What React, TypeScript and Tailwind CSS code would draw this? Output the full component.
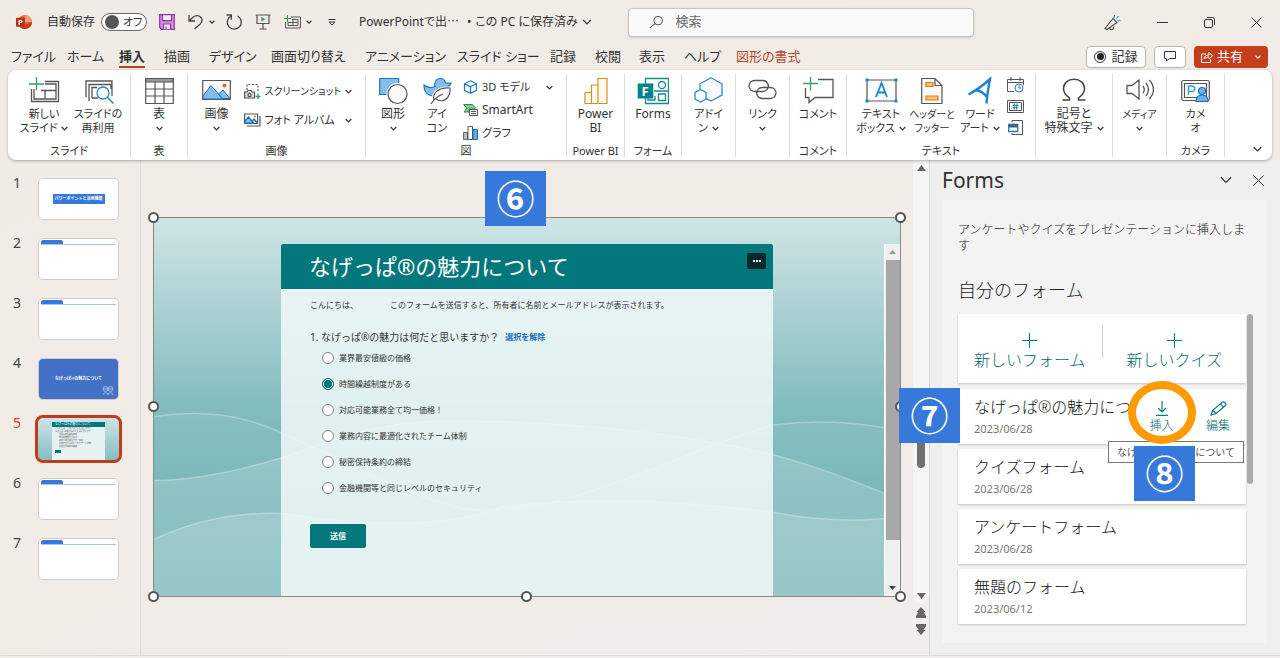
import type { ReactNode } from "react";
import { useState } from "react";

function Chevron({ className = "h-[5px] w-[7px]" }: { className?: string }) {
  return (
    <svg viewBox="0 0 8 5" className={`inline-block shrink-0 ${className}`} fill="none" stroke="#333" strokeWidth="1.2">
      <path d="M0.8 0.8 4 4 7.2 0.8" vectorEffect="non-scaling-stroke" />
    </svg>
  );
}

/* Ribbon building blocks */

function Group({ label, children }: { label?: string; children: ReactNode }) {
  return (
    <section className="my-1 flex min-w-0 flex-col border-r border-[#dcdcdc]">
      <div className="flex flex-1 justify-center pt-[3px]">{children}</div>
      <p className="h-[14px] text-center text-[11px] leading-4 whitespace-nowrap">{label}</p>
    </section>
  );
}

type BigButtonProps = {
  icon: ReactNode;
  top: string;
  bottom?: string;
  arrow?: boolean;
  width?: string;
  size?: string;
};

function BigButton({ icon, top, bottom, arrow, width = "w-[54px]", size = "text-[12px]" }: BigButtonProps) {
  return (
    <button type="button" className={`flex shrink-0 flex-col items-center leading-[14px] whitespace-nowrap ${width} ${size}`}>
      <span className="flex h-[30px] items-start">{icon}</span>
      <span>{top}</span>
      <span className="flex h-[14px] items-center gap-1">
        {bottom}
        {arrow && <Chevron />}
      </span>
    </button>
  );
}

type SmallButtonProps = {
  icon: ReactNode;
  label: string;
  arrow?: boolean;
  wide?: boolean;
  size?: string;
};

function SmallButton({ icon, label, arrow, wide, size = "text-[12px]" }: SmallButtonProps) {
  return (
    <button type="button" className={`flex h-5 w-full items-center gap-1 leading-4 whitespace-nowrap ${size}`}>
      <span className="shrink-0">{icon}</span>
      <span className={wide ? "flex-1 text-left" : ""}>{label}</span>
      {arrow && <Chevron />}
    </button>
  );
}

const TABS = [
  "ファイル", "ホーム", "挿入", "描画", "デザイン", "画面切り替え", "アニメーション",
  "スライド ショー", "記録", "校閲", "表示", "ヘルプ", "図形の書式",
];

function TitleBar() {
  return (
    <header className="flex h-11 items-center pl-[15px]">
      <svg viewBox="0 0 18 18" className="h-[17px] w-[18px]">
        <circle cx="10" cy="8.500" r="7.500" fill="#e8623a" />
        <path d="M10 1a7.500 7.500 0 0 1 7.500 7.500H10z" fill="#f79a7c" />
        <path d="M17.500 8.500a7.500 7.500 0 0 1-13 5z" fill="#c8401f" />
        <rect x="0.500" y="4" width="9.500" height="9.500" rx="1" fill="#b7301a" />
        <text x="2.600" y="11.600" fontSize="8" fontWeight="700" fill="#fff">P</text>
      </svg>
      <span id="autosave" className="ml-[14px] text-[12px]">自動保存</span>
      <button type="button" role="switch" aria-checked="false" aria-labelledby="autosave" className="ml-[6px] flex h-[18px] w-[46px] items-center gap-1 rounded-full border border-[#666] bg-white pl-[3px] text-[11px]">
        <span className="h-[14px] w-[14px] rounded-full bg-[#555]" />
        オフ
      </button>
      <button type="button" aria-label="上書き保存" className="ml-3">
        <svg viewBox="0 0 16 16" className="h-4 w-4" fill="#d58be0" stroke="#8a3aa0" strokeWidth="1.200">
          <path d="M0.700 0.700h14.600v14.600H2.500L0.700 13.500z" />
          <path d="M3.500 0.700h9v6h-9z" fill="#f6e9f8" />
          <path d="M4.500 15.300V10h7v5.300M7 12.500v2.800" fill="#f6e9f8" />
        </svg>
      </button>
      <button type="button" aria-label="元に戻す" className="ml-[13px] flex items-center gap-[5px]">
        <svg viewBox="0 0 16 16" className="h-4 w-4" fill="none" stroke="#444" strokeWidth="1.300">
          <path d="M1 1v6h6M1.200 6.800 5 3.300c3-2.600 6.500-1.800 8 .2 1.600 2.200 1 4.800-1 6.700L6.500 15" />
        </svg>
        <Chevron className="h-1 w-[6px]" />
      </button>
      <button type="button" aria-label="やり直し" className="ml-[10px]">
        <svg viewBox="0 0 18 16" className="h-4 w-[18px]" fill="none" stroke="#444" strokeWidth="1.300">
          <path d="M5.500 2.300A7 7 0 1 0 12.500 2M1.500 1h4.800v4.800" />
        </svg>
      </button>
      <button type="button" aria-label="スライドショー" className="ml-3">
        <svg viewBox="0 0 16 16" className="h-4 w-4" fill="none" stroke="#555" strokeWidth="1.200">
          <path d="M0.500 1h15M2 1v8.500h12V1M8 9.500V15M4.500 15h7" />
          <path d="m6.300 3 4 2.300-4 2.300z" fill="#2f9e55" stroke="none" />
        </svg>
      </button>
      <button type="button" aria-label="新しいスライド" className="ml-[13px] flex items-center gap-[5px]">
        <svg viewBox="0 0 17 14" className="h-[14px] w-[17px]" fill="none" stroke="#555" strokeWidth="1">
          <path d="M7 2h9.500v11H1.500V7M8 4.500h6v6H4V7M9 4.500v6M4 7.500h10" />
          <path d="M3.500 0v7M0 3.500h7" stroke="#2f9e55" />
        </svg>
        <Chevron className="h-1 w-[6px]" />
      </button>
      <button type="button" aria-label="クイック アクセス ツール バーのユーザー設定" className="ml-4">
        <svg viewBox="0 0 8 7" className="h-[7px] w-2" fill="none" stroke="#333">
          <path d="M0.500 0.500h7M1 3l3 3 3-3z" />
        </svg>
      </button>
      <button type="button" className="ml-[23px] flex items-center gap-1 text-[12px] whitespace-nowrap">
        <span>PowerPointで出⋯</span>
        <span className="ml-1">•</span>
        <span>この PC に保存済み</span>
        <Chevron className="h-[6px] w-[10px]" />
      </button>
      <label className="ml-9 flex h-[29px] max-w-[346px] flex-1 items-center rounded border border-[#c9c5c1] bg-[#fafafa] pl-5 shadow-sm">
        <svg viewBox="0 0 16 14" className="h-[14px] w-4" fill="none" stroke="#555" strokeWidth="1.100">
          <circle cx="10" cy="5.500" r="4.600" />
          <path d="M6.600 8.800 1 13.500" />
        </svg>
        <input type="search" aria-label="検索" placeholder="検索" className="ml-3 w-full bg-transparent text-[13px] outline-none placeholder:text-[#666]" />
      </label>
      <div className="ml-auto flex items-center gap-9 pr-[18px]">
        <button type="button" aria-label="新機能">
          <svg viewBox="0 0 17 17" className="h-[17px] w-[17px]" fill="none" stroke="#444" strokeWidth="1.100">
            <path d="M1 14.500 9 4.500l4 4L3 15.500zM5.500 14.500c2 2 4.500 1 4.500-2" />
            <path d="m10 4 .5-3M12.500 4.500l2-2.500M13.500 7l3-.5" stroke="#1b86d1" />
          </svg>
        </button>
        <button type="button" aria-label="最小化">
          <svg viewBox="0 0 11 11" className="h-[11px] w-[11px]" stroke="#333"><path d="M0 5.500h11" /></svg>
        </button>
        <button type="button" aria-label="元のサイズに戻す">
          <svg viewBox="0 0 11 11" className="h-[11px] w-[11px]" fill="none" stroke="#333">
            <rect x="0.500" y="2.500" width="8" height="8" rx="1.500" />
            <path d="M3 .5h5.500a2 2 0 0 1 2 2V8" />
          </svg>
        </button>
        <button type="button" aria-label="閉じる">
          <svg viewBox="0 0 11 11" className="h-[11px] w-[11px]" stroke="#333"><path d="m.5.5 10 10m0-10-10 10" /></svg>
        </button>
      </div>
    </header>
  );
}

function TabRow() {
  return (
    <div className="flex h-[26px] items-center pr-[12px]">
      <nav className="grid grid-cols-[56px_52px_45px_45px_62px_94px_92px_93px_45px_44px_45px_52px_80px] pl-[11px] text-[13px] leading-5 whitespace-nowrap">
        {TABS.map((tab) => (
          <div key={tab}>
            <button
              type="button"
              className={
                tab === "挿入"
                  ? "border-b-2 border-[#c43e1c] font-bold"
                  : tab === "図形の書式"
                    ? "border-b-2 border-transparent text-[#b7472a]"
                    : "border-b-2 border-transparent"
              }
            >
              {tab}
            </button>
          </div>
        ))}
      </nav>
      <div className="ml-auto flex gap-2 pb-[1px] text-[13px]">
        <button type="button" className="flex h-[22px] w-[60px] items-center justify-center gap-[5px] rounded border border-[#b9b5b2] bg-white">
          <span className="flex h-3 w-3 items-center justify-center rounded-full border border-[#333]">
            <span className="h-[7px] w-[7px] rounded-full bg-[#222]" />
          </span>
          記録
        </button>
        <button type="button" aria-label="コメント" className="flex h-[22px] w-8 items-center justify-center rounded border border-[#b9b5b2] bg-white">
          <svg viewBox="0 0 12 11" className="h-[11px] w-3" fill="none" stroke="#333">
            <path d="M.5.500h11v7h-6l-3 2.500V7.500h-2z" />
          </svg>
        </button>
        <button type="button" className="flex h-[22px] w-[74px] items-center justify-center gap-1 rounded bg-[#c43e1c] text-white">
          <svg viewBox="0 0 12 12" className="h-3 w-3" fill="none" stroke="#fff">
            <path d="M5 3H.500v8.500h9V8M3 8c.5-3 2-4 5-4V1l3.500 4L8 8V6C6 6 4.500 6.500 3 8z" />
          </svg>
          共有
          <svg viewBox="0 0 8 5" className="ml-2 h-1 w-[6px]" fill="none" stroke="#fff" strokeWidth="1.600"><path d="M.8.800 4 4 7.200.800" /></svg>
        </button>
      </div>
    </div>
  );
}

function Ribbon() {
  return (
    <div className="relative z-10 mx-2 grid h-[90px] grid-cols-[123px_57px_178px_201px_58px_57px_54px_54px_57px_189px_77px_54px_58px_1fr] rounded-lg bg-white shadow-[0_1px_3px_rgba(0,0,0,0.3)]">
      <Group label="スライド">
        <span className="w-1" />
        <BigButton
          top="新しい" bottom="スライド" arrow size="text-[11px]"
          icon={
            <svg viewBox="0 0 31 28" className="h-7 w-[31px]" fill="none" stroke="#555" strokeWidth="1.300">
              <path d="M16 4.500h13.500v20h-27V12M16 7h11v15H5V12M12 13.500h15M16 13.500V22" />
              <path d="M7.500 0v13.500M0 7h15" stroke="#35a35c" />
            </svg>
          }
        />
        <BigButton
          top="スライドの" bottom="再利用" size="text-[11px]"
          icon={
            <svg viewBox="0 0 31 28" className="h-7 w-[31px]" fill="none" stroke="#555" strokeWidth="1.300">
              <path d="M3 20V4h26v15M6 24V7.500h22V12M9 21V10.500h5M9 21h6" />
              <circle cx="20" cy="16" r="6" fill="#fff" stroke="#1b86d1" />
              <path d="m24.500 20.500 6 6" stroke="#1b86d1" strokeWidth="1.500" />
            </svg>
          }
        />
      </Group>

      <Group label="表">
        <BigButton
          top="表" arrow
          icon={
            <svg viewBox="0 0 29 28" className="h-7 w-[29px]" fill="none" stroke="#555" strokeWidth="1.200">
              <path d="M.7 1.500h27.600v25H.700zM.7 12h27.600M.7 19h27.600M10 5v21.500M19 5v21.500" />
              <path d="M.7 1.500h27.600V5H.700z" fill="#999" />
            </svg>
          }
        />
      </Group>

      <Group label="画像">
        <BigButton
          top="画像" arrow
          icon={
            <svg viewBox="0 0 29 24" className="h-6 w-[29px]" fill="none" stroke="#555" strokeWidth="1.200">
              <path d="M.7 3.500h27.600v19H.700z" fill="#fafafa" />
              <path d="m1 19 8-10.500 12 13.500H1zM16.500 17l4.500-4 7 8.500H20z" fill="#83beec" stroke="#1b70b8" strokeWidth="1" />
              <circle cx="22.500" cy="8.500" r="2" fill="#e66a15" stroke="none" />
            </svg>
          }
        />
        <div className="flex w-[120px] flex-col gap-[9px] pt-1 pr-3">
          <SmallButton
            label="スクリーンショット" arrow size="text-[10px]"
            icon={
              <svg viewBox="0 0 17 16" className="h-4 w-[17px]" fill="none" stroke="#555" strokeWidth="1.200">
                <path d="M3 7V1.500h11v7" strokeDasharray="2 1.500" />
                <path d="M.6 9H3l1-1.500h3L8 9h2.500v6H.600z" fill="#ddd" />
                <circle cx="5.500" cy="12" r="1.600" />
                <path d="M14 11v5M11.500 13.500h5" stroke="#35a35c" strokeWidth="1.500" />
              </svg>
            }
          />
          <SmallButton
            label="フォト アルバム" arrow wide size="text-[11px]"
            icon={
              <svg viewBox="0 0 17 14" className="h-[14px] w-[17px]" fill="none" stroke="#555" strokeWidth="1.200">
                <path d="M3 13h13V3" />
                <path d="M.6 1h13v9.500H.600z" fill="#fff" />
                <path d="m1 8 3.500-4 5 6H1zM8 8l2-2 3.500 4" fill="#83beec" stroke="#1b70b8" />
                <circle cx="11" cy="3.500" r="1" fill="#e66a15" stroke="none" />
              </svg>
            }
          />
        </div>
      </Group>

      <Group label="図">
        <BigButton
          top="図形" arrow width="w-[44px]"
          icon={
            <svg viewBox="0 0 29 28" className="h-7 w-[29px]" strokeWidth="1.200">
              <path d="M.7 1.500h19v16H.700z" fill="#83beec" stroke="#1b78c4" />
              <circle cx="18.500" cy="17" r="11" fill="#fff" />
              <circle cx="18.500" cy="17" r="9.500" fill="#fafafa" stroke="#555" />
            </svg>
          }
        />
        <BigButton
          top="アイ" bottom="コン" width="w-[44px]" size="text-[11px]"
          icon={
            <svg viewBox="0 0 29 28" className="h-7 w-[29px]" strokeWidth="1.200">
              <path d="M1 8c4 3 8 3 11 1.500-1-4 1-8 5-8 3 0 5 2 5.500 4.500L28 6c-1 3-3 4-5 4.500C23 16 17 19 11 19 5 19 1 15 1 8z" fill="#83beec" stroke="#1b78c4" />
              <path d="M11 23c-2-6 4-13 16-12 1 9-6 16-14 11" fill="#fff" stroke="#fff" strokeWidth="3" />
              <path d="M11 23c-2-6 4-13 16-12 1 9-6 16-14 11" fill="#fff" stroke="#555" />
              <path d="M8 27c3-5 7-8 12-10" fill="none" stroke="#555" />
            </svg>
          }
        />
        <div className="flex w-[102px] flex-col gap-[3px] pr-2 pl-1">
          <SmallButton
            label="3D モデル" arrow wide size="text-[11px]"
            icon={
              <svg viewBox="0 0 14 14" className="h-[14px] w-[15px]" fill="none" stroke="#1b78c4" strokeWidth="1.200">
                <path d="m7 .8 6 3v6.500l-6 3-6-3V3.800zM1 3.800l6 3 6-3M7 7v6.500" />
              </svg>
            }
          />
          <SmallButton
            label="SmartArt"
            icon={
              <svg viewBox="0 0 15 12" className="h-3 w-[15px]" strokeWidth="1">
                <path d="M.500.500h9l3 3.500-1 1H6v3H1L4 4z" fill="#7bcf93" stroke="#2d8a4a" />
                <path d="M6.500 5.500h8v6h-8z" fill="#eee" stroke="#555" />
                <path d="M8 7.500h5M8 9.500h5" stroke="#555" />
              </svg>
            }
          />
          <SmallButton
            label="グラフ" size="text-[11px]"
            icon={
              <svg viewBox="0 0 15 14" className="h-[14px] w-[15px]" strokeWidth="1">
                <path d="M.5 6.500h4v7h-4z" fill="#bbb" stroke="#666" />
                <path d="M5 .500h4.500v13H5z" fill="#fff" stroke="#555" />
                <path d="M10 3.500h4.500v10H10z" fill="#5fa9e6" stroke="#1b70b8" />
              </svg>
            }
          />
        </div>
      </Group>

      <Group label="Power BI">
        <BigButton
          top="Power" bottom="BI"
          icon={
            <svg viewBox="0 0 24 28" className="h-7 w-6" fill="#fffaf0" stroke="#dc8e1b" strokeWidth="1.200">
              <path d="M14 1.500h9v25h-9zM7.500 8h6.500v18.500H7.500zM1 15.500h6.500v11H1z" />
            </svg>
          }
        />
      </Group>

      <Group label="フォーム">
        <BigButton
          top="Forms"
          icon={
            <svg viewBox="0 0 32 28" className="h-7 w-8" fill="none" stroke="#1b8a8c" strokeWidth="1.300">
              <path d="M8.500 1.500h23v25h-23zM17 14h14.500M11 19v4h7v-4" />
              <circle cx="25" cy="8" r="3.500" />
              <path d="M21.500 17h7v6.500h-7z" />
              <path d="M.7 6.500h15.600v15H.700z" fill="#038387" stroke="none" />
              <text x="4.500" y="18.500" fontSize="13" fontWeight="700" fill="#fff" stroke="none">F</text>
            </svg>
          }
        />
      </Group>

      <Group>
        <BigButton
          top="アドイ" bottom="ン" arrow size="text-[11px]"
          icon={
            <svg viewBox="0 0 29 27" className="h-[27px] w-[29px]" fill="#f8fafd" stroke="#2b88d8" strokeWidth="1.300">
              <path d="m17 .8 11 6V18l-11 6-11-6V6.800z" />
              <path d="m6.500 12.500 5.500 3v6.500l-5.500 3-5.500-3v-6.500z" fill="#fff" />
            </svg>
          }
        />
      </Group>

      <Group>
        <BigButton
          top="リンク" arrow size="text-[11px]"
          icon={
            <svg viewBox="0 0 29 24" className="h-6 w-[29px]" fill="none" stroke="#555" strokeWidth="1.300">
              <path d="M10 14.500H6.500A5.500 5.500 0 0 1 6.500 3.500h8a5.500 5.500 0 0 1 4.500 9" />
              <path d="M19 10.500h3.500a5.500 5.500 0 0 1 0 11h-8a5.500 5.500 0 0 1-4.500-9" />
              <path d="M10 12.500c1-1.500 2.500-2 4.500-2H19M19 12.500c-1 1.500-2.500 2-4.500 2H10" />
            </svg>
          }
        />
      </Group>

      <Group label="コメント">
        <BigButton
          top="コメント" size="text-[11px]"
          icon={
            <svg viewBox="0 0 31 27" className="h-[27px] w-[31px]" fill="none" stroke="#555" strokeWidth="1.300">
              <path d="M15 2.500h15v18H12L6 25.500v-5H2.500V11" />
              <path d="M7.500 0v13.500M0 6.500h15" stroke="#35a35c" />
            </svg>
          }
        />
      </Group>

      <Group label="テキスト">
        <BigButton
          top="テキスト" bottom="ボックス" arrow width="w-[52px]" size="text-[11px]"
          icon={
            <svg viewBox="0 0 33 26" className="h-[26px] w-[33px]" fill="none" stroke="#555" strokeWidth="1.200">
              <path d="M2 3h29v21H2z" />
              <path d="M.5 1.500h3v3h-3zM29.500 1.500h3v3h-3zM.5 22.500h3v3h-3zM29.500 22.500h3v3h-3z" fill="#1b86d1" stroke="none" />
              <path d="m11 20 5.500-14L22 20M13 15.500h7" stroke="#1b86d1" strokeWidth="1.800" />
            </svg>
          }
        />
        <BigButton
          top="ヘッダーと" bottom="フッター" width="w-[50px]" size="text-[10px]"
          icon={
            <svg viewBox="0 0 22 28" className="h-7 w-[22px]" fill="#fafafa" stroke="#555" strokeWidth="1.200">
              <path d="M.7 1.500H14L21 8.500v18H.700zM14 1.500v7h7" />
              <path d="M5 5.500h7v4H5zM5 19h12v4H5z" fill="#fbc36b" stroke="#e07a10" />
            </svg>
          }
        />
        <BigButton
          top="ワード" bottom="アート" arrow width="w-[46px]" size="text-[11px]"
          icon={
            <svg viewBox="0 0 24 28" className="h-7 w-6" fill="none" stroke="#1b86d1" strokeWidth="2.400">
              <path d="M.5 17.500C9 13 16 7.500 22 2c-1.500 8-3 16-3.500 24.500M7 13c5 .5 9 3 12 7" />
            </svg>
          }
        />
        <div className="flex w-6 flex-col items-center gap-[7px]">
          <button type="button" aria-label="日付と時刻">
            <svg viewBox="0 0 17 16" className="h-4 w-[17px]" fill="none" stroke="#555">
              <path d="M7 14.500H.500v-12h16V8M.5 5.500h16M4 0v4M13 0v4" />
              <circle cx="12" cy="11" r="4" fill="#fff" stroke="#1b78c4" />
              <path d="M12 8.500V11h2" stroke="#1b78c4" />
            </svg>
          </button>
          <button type="button" aria-label="スライド番号">
            <svg viewBox="0 0 17 13" className="h-[13px] w-[17px]" fill="none" stroke="#555">
              <path d="M.5.500h16v12H.500zM2.500 2.500h12v8h-12z" />
              <path d="M7.500 3.500 7 9.500M10 3.500l-.5 6M5.500 5.500h6M5.500 7.700h6" stroke="#1b78c4" />
            </svg>
          </button>
          <button type="button" aria-label="オブジェクト">
            <svg viewBox="0 0 15 15" className="h-[15px] w-[15px]" fill="none" stroke="#555">
              <path d="M4 2.500V.500h10.500v14H4V13" />
              <path d="M.7 4.500h9v7h-9z" fill="#fff" stroke="#1b78c4" strokeWidth="1.300" />
              <path d="M1 5h8.500v2H1z" fill="#1b78c4" />
            </svg>
          </button>
        </div>
      </Group>

      <Group>
        <BigButton
          top="記号と" bottom="特殊文字" arrow width="w-[70px]"
          icon={
            <svg viewBox="0 0 24 27" className="h-[27px] w-6" fill="none" stroke="#444" strokeWidth="1.500">
              <path d="M.5 23h7v-2C3 18 1.500 15 1.500 11.500 1.500 6 6 2.300 12 2.300S22.500 6 22.500 11.500c0 3.500-1.500 6.500-6 9.500v2h7" />
            </svg>
          }
        />
      </Group>

      <Group>
        <BigButton
          top="メディア" arrow size="text-[10px]"
          icon={
            <svg viewBox="0 0 28 24" className="h-6 w-7" fill="none" stroke="#555" strokeWidth="1.300">
              <path d="M1 8.500h5L13 3v19l-7-5.500H1zM17 9c1.500 2 1.500 5 0 7M20 6c3 4 3 9 0 13M23.500 3c5 6 5 13 0 19" />
            </svg>
          }
        />
      </Group>

      <Group label="カメラ">
        <BigButton
          top="カメ" bottom="オ" size="text-[11px]"
          icon={
            <svg viewBox="0 0 29 26" className="h-[26px] w-[29px]" fill="none" stroke="#555" strokeWidth="1.200">
              <rect x=".7" y="3.500" width="27.600" height="20" rx="2" />
              <path d="M3.500 6.500h22v14h-22z" />
              <path d="M7.500 18V9h3.500a2.700 2.700 0 0 1 0 5.500H7.500" stroke="#3f9fe6" strokeWidth="1.600" />
              <circle cx="21" cy="14" r="3.500" fill="#6db0ea" stroke="#1b70b8" />
              <path d="M15 24.500c0-5 2-6.500 6-6.500s6 1.500 6 6.500z" fill="#6db0ea" stroke="#1b70b8" />
            </svg>
          }
        />
      </Group>

      <button type="button" aria-label="リボンを折りたたむ" className="flex items-end justify-end pr-[9px] pb-[9px]">
        <Chevron className="h-[6px] w-[11px]" />
      </button>
    </div>
  );
}

/* Slide list */

function MiniForm() {
  return (
    <div className="flex h-full flex-col bg-gradient-to-b from-[#cde4e6] to-[#86bdc0] px-[14px] pt-[4px]">
      <p className="bg-[#03787c] pl-[3px] text-[3px] leading-[5px] text-white">なげっぱ®の魅力について</p>
      <div className="flex-1 bg-[#e6f2f2] pl-[3px] text-[2px] leading-[3px] text-[#555]">
        <p>こんにちは、このフォームを送信すると</p>
        <p>なげっぱ®の魅力は何だと思いますか？</p>
        <p className="pl-1">業界最安値級の価格</p>
        <p className="pl-1">時間繰越制度がある</p>
        <p className="pl-1">対応可能業務全て均一価格！</p>
        <p className="pl-1">業務内容に最適化されたチーム体制</p>
        <p className="pl-1">秘密保持条約の締結</p>
        <p className="mt-[2px] h-[3px] w-[6px] bg-[#03787c]" />
      </div>
    </div>
  );
}

function SlideThumb({ index }: { index: number }) {
  if (index === 1) {
    return (
      <div className="flex h-full items-center justify-center bg-white">
        <span className="bg-[#3779db] px-[2px] text-[4px] leading-[10px] font-bold whitespace-nowrap text-white">パワーポイントと活用機能</span>
      </div>
    );
  }
  if (index === 4) {
    return (
      <div className="relative flex h-full items-center justify-center bg-[#4371c5]">
        <span className="text-[4px] font-bold whitespace-nowrap text-white">なげっぱ®の魅力について</span>
        <svg viewBox="0 0 12 10" className="absolute right-1 bottom-[3px] h-[10px] w-3" fill="none" stroke="#b9cbec" strokeWidth=".8">
          <circle cx="3.500" cy="3" r="2.400" />
          <circle cx="8.500" cy="3" r="2.400" />
          <path d="M1 3h10M1 9c0-3 5-3 5 0 0-3 5-3 5 0" />
        </svg>
      </div>
    );
  }
  if (index === 5) return <MiniForm />;
  return (
    <div className="h-full bg-white px-[2px] pt-[1px]">
      <div className="border-b border-[#a9c6f2]">
        <p className="h-1 w-[22px] rounded-t-xs bg-[#3779db]" />
      </div>
    </div>
  );
}

function SlideList() {
  return (
    <aside className="w-[141px] shrink-0 border-r border-[#dfdcda] pt-[18px]">
      <ol className="flex flex-col gap-[18px]">
        {[1, 2, 3, 4, 5, 6, 7].map((n) => (
          <li key={n} className="flex gap-[15px] pl-[13px]">
            <span className={`w-[10px] text-[14px] leading-[10px] ${n === 5 ? "text-[#d14424]" : "text-[#444]"}`}>{n}</span>
            <button
              type="button"
              aria-label={`スライド ${n}`}
              className={`h-[42px] w-[81px] overflow-hidden rounded-[5px] text-left ${
                n === 5 ? "outline-3 outline-[#bf3c1d]" : "border border-[#cfcccb]"
              }`}
            >
              <SlideThumb index={n} />
            </button>
          </li>
        ))}
      </ol>
    </aside>
  );
}

/* Slide canvas */

const OPTIONS = [
  "業界最安値級の価格",
  "時間繰越制度がある",
  "対応可能業務全て均一価格！",
  "業務内容に最適化されたチーム体制",
  "秘密保持条約の締結",
  "金融機関等と同じレベルのセキュリティ",
];

function Waves() {
  return (
    <svg viewBox="0 0 748 380" preserveAspectRatio="none" className="absolute inset-0 h-full w-full">
      <defs>
        <linearGradient id="sky" x1="0" y1="0" x2="0" y2="1">
          <stop offset="0" stopColor="#cde5e7" />
          <stop offset="0.070" stopColor="#c5dfe0" />
          <stop offset="0.500" stopColor="#82bcbe" />
          <stop offset="0.720" stopColor="#72b3b5" />
          <stop offset="1" stopColor="#68adb0" />
        </linearGradient>
      </defs>
      <path d="M0 0h748v380H0z" fill="url(#sky)" />
      <g fill="#fff" fillOpacity="0.060" stroke="#fff" strokeOpacity="0.300" strokeWidth="1.500">
        <path d="M-2 200C50 192 90 198 128 216 190 242 240 275 310 292c100 14 220 -60 311 -84 50 -6 90 -2 130 6V382H-2z" />
        <path d="M-2 264C40 264 85 254 128 241 180 222 230 204 290 204c120 0 230 10 331 34 45 12 85 28 130 46V382H-2z" fillOpacity="0.160" />
        <path d="M-2 324C40 304 80 296 128 297 220 312 300 310 350 290c90-10 180 -6 271 6 50 9 90 10 130 4V382H-2z" fillOpacity="0.140" />
      </g>
    </svg>
  );
}

function SurveyForm() {
  const [answer, setAnswer] = useState(1);
  return (
    <form onSubmit={(e) => e.preventDefault()} className="mr-[111px] flex min-w-0 flex-1 flex-col rounded-t-xs bg-[#f1f9f8]/85 text-[8px] text-[#333]">
      <div className="flex h-[46px] items-center justify-between rounded-t-xs border-b border-white bg-[#03787c] pl-7">
        <h1 className="text-[22px] text-white">なげっぱ®の魅力について</h1>
        <button type="button" aria-label="その他" className="mr-[7px] mb-3 flex h-4 w-[19px] items-center justify-center gap-[1px] rounded-xs bg-[#03292d]">
          <span className="h-[2px] w-[2px] bg-white" />
          <span className="h-[2px] w-[2px] bg-white" />
          <span className="h-[2px] w-[2px] bg-white" />
        </button>
      </div>
      <div className="pt-[7px] pl-[29px]">
        <p className="flex gap-8 leading-4">
          <span>こんにちは、</span>
          <span>このフォームを送信すると、所有者に名前とメールアドレスが表示されます。</span>
        </p>
        <fieldset>
          <div className="mt-4 flex items-center gap-[6px] leading-4">
            <legend className="text-[10px]">1. なげっぱ®の魅力は何だと思いますか？</legend>
            <button type="button" onClick={() => setAnswer(-1)} className="font-bold text-[#1070b8]">選択を解除</button>
          </div>
          {OPTIONS.map((option, i) => (
            <label key={option} className="flex h-[26px] items-center gap-[5px] pl-3">
              <input
                type="radio"
                name="answer"
                checked={answer === i}
                onChange={() => setAnswer(i)}
                className="h-3 w-3 appearance-none rounded-full border border-[#888] bg-white checked:border-[#03787c] checked:bg-[#03787c] checked:shadow-[inset_0_0_0_1px_#fff]"
              />
              {option}
            </label>
          ))}
        </fieldset>
        <button type="submit" className="mt-[23px] h-6 w-14 rounded-xs bg-[#03787c] font-bold text-white">送信</button>
      </div>
    </form>
  );
}

function Handle({ className }: { className: string }) {
  return <span className={`absolute h-[11px] w-[11px] rounded-full border-2 border-[#555] bg-white ${className}`} />;
}

function Badge({ children, className }: { children: string; className: string }) {
  return (
    <span className={`absolute z-20 flex h-[55px] w-[61px] items-center justify-center bg-[#3779db] text-[38px] leading-[55px] font-bold text-white ${className}`}>
      {children}
    </span>
  );
}

function Canvas() {
  return (
    <main className="relative flex min-w-0 flex-1 flex-col px-3 pt-[57px] pb-[58px]">
      <Badge className="top-[11px] left-[344px]">⑥</Badge>
      <div className="relative flex-1 border border-[#888]">
        <div className="relative flex h-full overflow-hidden pt-[26px] pl-[127px]">
          <Waves />
          <div className="relative flex flex-1">
            <SurveyForm />
            <div className="flex w-4 flex-col items-center border-l border-white bg-[#f0f0f0]">
              <svg viewBox="0 0 7 4" className="my-[6px] h-1 w-[7px]" fill="#999"><path d="M0 4 3.500 0 7 4z" /></svg>
              <span className="w-[14px] flex-1 bg-[#a8a8a8]" />
              <svg viewBox="0 0 7 4" className="mt-[46px] mb-[6px] h-1 w-[7px]" fill="#444"><path d="M0 0l3.500 4L7 0z" /></svg>
            </div>
          </div>
        </div>
        <Handle className="top-[-6px] left-[-6px]" />
        <Handle className="top-[-6px] right-[-6px]" />
        <Handle className="top-1/2 left-[-6px] -mt-[6px]" />
        <Handle className="top-1/2 right-[-6px] -mt-[6px]" />
        <Handle className="bottom-[-6px] left-[-6px]" />
        <Handle className="right-[-6px] bottom-[-6px]" />
        <Handle className="bottom-[-6px] left-1/2 -ml-[6px]" />
      </div>
    </main>
  );
}

function CanvasScrollbar() {
  return (
    <div className="flex w-4 shrink-0 flex-col items-center pb-[20px]">
      <div className="flex w-full flex-1 flex-col items-center rounded-b-lg bg-[#f5f5f5] pt-[5px] pb-1">
        <svg viewBox="0 0 9 6" className="h-[6px] w-[9px]" fill="#666"><path d="M0 6 4.500 0 9 6z" /></svg>
        <span className="flex-2" />
        <span className="h-12 w-2 rounded-full bg-[#707070]" />
        <span className="flex-1" />
        <svg viewBox="0 0 9 6" className="h-[6px] w-[9px]" fill="#666"><path d="m0 0 4.500 6L9 0z" /></svg>
      </div>
      <svg viewBox="0 0 10 28" className="mt-1 h-7 w-[10px]" fill="#666">
        <path d="m5 0 4.500 5H7.500L10 9v2H0V9l2.500-4H.500zM5 28l4.500-5H7.500L10 19v-2H0v2l2.500 4H.500z" />
      </svg>
    </div>
  );
}

/* Forms pane */

const FORMS = [
  { title: "なげっぱ®の魅力につ", date: "2023/06/28", active: true },
  { title: "クイズフォーム", date: "2023/06/28", active: false },
  { title: "アンケートフォーム", date: "2023/06/28", active: false },
  { title: "無題のフォーム", date: "2023/06/12", active: false },
];

function CreateButton({ label }: { label: string }) {
  return (
    <button type="button" className="flex flex-1 flex-col items-center pt-[19px] text-[16px] leading-5 text-[#04686c]">
      <svg viewBox="0 0 15 15" className="mb-[2px] h-[15px] w-[15px]" stroke="#0e7c80" strokeWidth="1"><path d="M7.500 0v15M0 7.500h15" /></svg>
      {label}
    </button>
  );
}

function FormsPane() {
  return (
    <aside className="relative flex w-[351px] shrink-0 flex-col border-l border-[#d9d9d9] bg-[#efefef] pr-[13px] pb-3 pl-3">
      <Badge className="top-[228px] left-[-31px]">⑦</Badge>
      <div className="flex h-10 items-center justify-between pr-[3px]">
        <h2 className="text-[21px] leading-6 text-[#333]">Forms</h2>
        <div className="flex items-center gap-5">
          <button type="button" aria-label="作業ウィンドウのオプション" className="flex"><Chevron className="h-2 w-[14px]" /></button>
          <button type="button" aria-label="閉じる">
            <svg viewBox="0 0 11 11" className="h-[11px] w-[11px]" stroke="#333"><path d="m.5.5 10 10m0-10-10 10" /></svg>
          </button>
        </div>
      </div>
      <div className="flex-1 bg-[#f3f3f3] px-4 pt-[22px] font-light">
        <p className="text-[12px] leading-4 text-[#222]">アンケートやクイズをプレゼンテーションに挿入します</p>
        <h3 className="mt-6 text-[18px] leading-6 text-[#222]">自分のフォーム</h3>
        <div className="relative mt-3 pr-[5px]">
          <div className="flex h-[69px] bg-white shadow-[0_1px_2px_rgba(0,0,0,0.2)]">
            <CreateButton label="新しいフォーム" />
            <span className="mt-[11px] h-[33px] w-px bg-[#d0d0d0]" />
            <CreateButton label="新しいクイズ" />
          </div>
          <ul className="mt-[6px] flex flex-col gap-[5px]">
            {FORMS.map((form) => (
              <li key={form.title} className="flex h-[55px] bg-white shadow-[0_1px_2px_rgba(0,0,0,0.2)]">
                <div className="min-w-0 flex-1 overflow-hidden pt-[6px] pl-4 whitespace-nowrap">
                  <p className="text-[16px] leading-6 text-[#111]">{form.title}</p>
                  <p className="mt-[2px] text-[11px] leading-4 font-normal text-[#777]">{form.date}</p>
                </div>
                {form.active && (
                  <div className="flex text-[12px] leading-4 text-[#04686c]">
                    <button type="button" className="flex w-[57px] flex-col items-center gap-[2px] pt-[12px]">
                      <svg viewBox="0 0 12 15" className="h-[15px] w-3" fill="none" stroke="#0e7c80" strokeWidth="1.200">
                        <path d="M6 0v11M2 7l4 4 4-4M0 14.400h12" />
                      </svg>
                      挿入
                    </button>
                    <button type="button" className="flex w-[56px] flex-col items-center gap-[2px] pt-[12px]">
                      <svg viewBox="0 0 17 15" className="h-[15px] w-[17px]" fill="none" stroke="#0e7c80" strokeWidth="1.200">
                        <path d="m1 14 1.500-4.500L12 1.500c2-1.500 5 1 3.500 3L6 12.500zM10.500 2.800l3.500 3.500M2.500 9.500 6 12.500" />
                      </svg>
                      編集
                    </button>
                  </div>
                )}
              </li>
            ))}
          </ul>
          <span className="absolute top-0 right-[-2px] h-[170px] w-[6px] rounded-full bg-[#ababab]" />
          <span className="absolute top-[127px] left-[150px] flex h-[22px] w-[136px] items-center justify-center border border-[#777] bg-white text-[10px] font-normal whitespace-nowrap text-[#555]">
            なげっぱ®の魅力について
          </span>
          <span className="absolute top-[67px] left-[170px] h-[63px] w-[68px] rounded-[50%] border-8 border-[#ff9a00]" />
          <Badge className="top-[132px] left-[176px]">⑧</Badge>
        </div>
      </div>
    </aside>
  );
}

export default function App() {
  return (
    <div
      lang="ja"
      className="flex min-h-screen flex-col bg-gradient-to-br from-[#f0ebe4] via-[#f1ece6] to-[#f1edee] pb-[2px] font-['Noto_Sans','Noto_Sans_CJK_JP',sans-serif] text-[#333]"
    >
      <div className="[font-feature-settings:'palt']">
        <TitleBar />
        <TabRow />
        <Ribbon />
      </div>
      <div className="flex flex-1 border-b border-[#dcdad8]">
        <SlideList />
        <Canvas />
        <CanvasScrollbar />
        <FormsPane />
      </div>
    </div>
  );
}
